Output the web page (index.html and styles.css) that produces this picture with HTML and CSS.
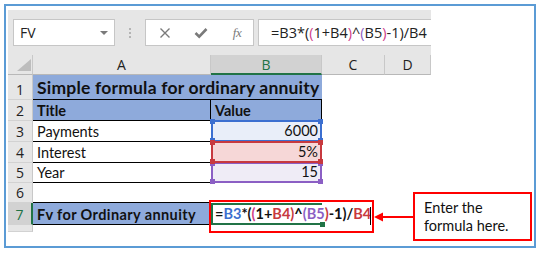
FILE: index.html
```html
<!DOCTYPE html>
<html>
<head>
    <title>Ordinary annuity</title>
    <link rel="stylesheet" href="styles.css">
</head>
<body>
    <div class="frame">
        <div class="excel">
            <div class="toolbar">
                <div class="namebox"><span>FV</span><span class="caret"></span></div>
                <div class="grip"><i></i><i></i><i></i></div>
                <div class="buttons">
                    <svg width="12" height="12" viewBox="0 0 12 12"><path d="M1.5 1.5 L10.5 10.5 M10.5 1.5 L1.5 10.5" stroke="#7a7a7a" stroke-width="1.4" fill="none"/></svg>
                    <svg width="14" height="12" viewBox="0 0 14 12"><path d="M1.5 6 L5.2 9.6 L12.5 2" stroke="#7a7a7a" stroke-width="2.6" fill="none"/></svg>
                    <span class="fx">fx</span>
                </div>
                <div class="formula">=B3*(<span class="pa">(</span>1+B4<span class="pa">)</span>^<span class="pb">(</span>B5<span class="pa">)</span>-1)/B4</div>
            </div>

            <div class="sheet">
                <div class="corner"><span></span></div>
                <div class="colhead">A</div>
                <div class="colhead selected">B</div>
                <div class="colhead">C</div>
                <div class="colhead">D</div>

                <div class="rowhead">1</div>
                <div class="cell title span2">Simple formula for ordinary annuity</div>
                <div class="cell"></div>
                <div class="cell"></div>

                <div class="rowhead">2</div>
                <div class="cell head lined">Title</div>
                <div class="cell head lined">Value</div>
                <div class="cell"></div>
                <div class="cell"></div>

                <div class="rowhead">3</div>
                <div class="cell lined">Payments</div>
                <div class="cell ref blue">6000<i class="h tl"></i><i class="h tr"></i><i class="h bl"></i><i class="h br"></i></div>
                <div class="cell"></div>
                <div class="cell"></div>

                <div class="rowhead">4</div>
                <div class="cell lined">Interest</div>
                <div class="cell ref red">5%<i class="h tl"></i><i class="h tr"></i><i class="h bl"></i><i class="h br"></i></div>
                <div class="cell"></div>
                <div class="cell"></div>

                <div class="rowhead">5</div>
                <div class="cell lined">Year</div>
                <div class="cell ref purple">15<i class="h tl"></i><i class="h tr"></i><i class="h bl"></i><i class="h br"></i></div>
                <div class="cell"></div>
                <div class="cell"></div>

                <div class="rowhead">6</div>
                <div class="cell lined"></div>
                <div class="cell"></div>
                <div class="cell"></div>
                <div class="cell"></div>

                <div class="rowhead selected">7</div>
                <div class="cell head lined wide">Fv for Ordinary annuity</div>
                <div class="cell active"><span class="edit">=<b class="c1">B3</b>*(<b class="c4">(</b>1+<b class="c2">B4</b><b class="c2">)</b>^<b class="c3">(</b><b class="c3">B5</b><b class="c2">)</b>-1)/<b class="c2">B4</b></span><i class="h br green"></i></div>
                <div class="cell"></div>
                <div class="cell"></div>

                <div class="rowhead"></div>
                <div class="cell"></div>
                <div class="cell"></div>
                <div class="cell"></div>
                <div class="cell"></div>
            </div>
        </div>

        <div class="mark"><span class="cursor"></span></div>
        <svg class="arrow" width="40" height="12" viewBox="0 0 40 12">
            <path d="M8 6 L40 6" stroke="#ff0000" stroke-width="2"/>
            <path d="M0 6 L9 1.5 L9 10.5 Z" fill="#ff0000"/>
        </svg>
        <div class="callout">Enter the<br>formula here.</div>
    </div>
</body>
</html>
```

FILE: styles.css
```css
body{
    margin:0;
    background:#fff;
    font-family:"Lato", sans-serif;
}

.frame{
    position:relative;
    margin:4px;
    width:532px;
    height:244px;
    box-sizing:border-box;
    border:2px solid #5b9bd5;
    padding:4px 0 0 2px;
}

.excel{
    width:423px;
}

/* formula bar */
.toolbar{
    height:45px;
    box-sizing:border-box;
    padding:9px 0 0 5px;
    background:#e6e6e6;
    display:flex;
    align-items:flex-start;
}

.namebox{
    width:102px;
    height:27px;
    box-sizing:border-box;
    border:1px solid #c6c6c6;
    background:#fff;
    display:flex;
    align-items:center;
    justify-content:space-between;
    padding:0 6px 0 6px;
    font:14px "Open Sans", sans-serif;
    color:#222;
}

.caret{
    border-left:4px solid transparent;
    border-right:4px solid transparent;
    border-top:4px solid #7a7a7a;
}

.grip{
    width:30px;
    height:27px;
    display:flex;
    flex-direction:column;
    align-items:center;
    justify-content:center;
    gap:2px;
}

.grip i{
    width:2px;
    height:2px;
    background:#b4b4b4;
}

.buttons{
    width:109px;
    height:27px;
    box-sizing:border-box;
    border:1px solid #c6c6c6;
    background:#fff;
    display:grid;
    grid-template-columns:37px 36px 36px;
    justify-items:center;
    align-items:center;
}

.fx{
    font:italic 13px "Liberation Serif", serif;
    color:#7a7a7a;
    letter-spacing:-0.5px;
}

.formula{
    margin-left:4px;
    flex:1;
    height:27px;
    box-sizing:border-box;
    border:1px solid #c6c6c6;
    border-right:none;
    background:#fff;
    padding:0 0 0 12px;
    font:14.5px "Open Sans", sans-serif;
    line-height:25px;
    color:#222;
    white-space:nowrap;
}

.pa{ color:#d0408a; }
.pb{ color:#8e5fc3; }

/* sheet */
.sheet{
    display:grid;
    grid-template-columns:25px 178px 111px 63px 46px;
    grid-template-rows:20px 25px 21px 21px 21px 20px 20px 22px 7px;
    background:#fff;
    font-size:14.5px;
    color:#111;
}

.corner{
    background:#e6e6e6;
    border-right:1px solid #c8c8c8;
    border-bottom:1px solid #b8b8b8;
    position:relative;
}

.corner span{
    position:absolute;
    right:1px;
    bottom:3px;
    border-left:14px solid transparent;
    border-bottom:12px solid #bdbdbd;
}

.colhead{
    background:#e6e6e6;
    border-right:1px solid #c8c8c8;
    border-bottom:1px solid #b8b8b8;
    box-sizing:border-box;
    text-align:center;
    font:14px/19px "Open Sans", sans-serif;
    color:#222;
}

.colhead.selected{
    background:#d2d2d2;
    color:#217346;
    border-bottom:2px solid #217346;
}

.rowhead{
    background:#e6e6e6;
    border-right:1px solid #c8c8c8;
    border-bottom:1px solid #d2d2d2;
    box-sizing:border-box;
    display:flex;
    align-items:flex-end;
    justify-content:center;
    padding-bottom:0;
    font:14px "Open Sans", sans-serif;
    color:#222;
}

.rowhead.selected{
    background:#d2d2d2;
    color:#217346;
    border-right:2px solid #217346;
}

.cell{
    box-sizing:border-box;
    display:flex;
    align-items:flex-end;
    padding:0 3px 1px 4px;
    white-space:nowrap;
    position:relative;
}

.span2{
    grid-column:span 2;
}

.title{
    background:#8eaadb;
    font-weight:bold;
    font-size:17.5px;
    letter-spacing:0.2px;
    border-bottom:1px solid #000;
}

.head{
    background:#8eaadb;
    font-weight:bold;
    border-right:1px solid #000;
}

.wide{
    letter-spacing:0.4px;
}

.lined{
    border-bottom:1px solid #000;
}

.ref{
    justify-content:flex-end;
    border:2px solid;
    margin:-1px 0 0 0;
    padding-right:2px;
}

.blue{ border-color:#3c6fd0; background:#e9eef9; }
.red{ border-color:#c7393f; background:#f6d7d7; z-index:2; }
.purple{ border-color:#8b5fc4; background:#efecf6; }

.h{
    position:absolute;
    width:5px;
    height:5px;
}

.blue .h{ background:#3c6fd0; }
.red .h{ background:#c7393f; }
.purple .h{ background:#8b5fc4; }

.tl{ left:-3px; top:-3px; }
.tr{ right:-3px; top:-3px; }
.bl{ left:-3px; bottom:-3px; }
.br{ right:-3px; bottom:-3px; }

.active{
    border:2px solid #217346;
    border-right:none;
    padding-left:2px;
}

.edit{
    font-weight:bold;
    color:#111;
}

.edit b{ font-weight:bold; }
.c1{ color:#3c6fd0; }
.c2{ color:#c7393f; }
.c3{ color:#8b5fc4; }
.c4{ color:#d0408a; }

.h.green{
    background:#217346;
    right:-3px;
    bottom:-4px;
}

/* annotations */
.mark{
    position:absolute;
    left:203px;
    top:194px;
    width:165px;
    height:33px;
    box-sizing:border-box;
    border:2px solid #ff0000;
}

.cursor{
    position:absolute;
    right:1px;
    top:5px;
    width:1px;
    height:18px;
    background:#000;
}

.arrow{
    position:absolute;
    left:368px;
    top:205px;
}

.callout{
    position:absolute;
    left:407px;
    top:186px;
    width:119px;
    height:49px;
    box-sizing:border-box;
    border:2px solid #ff0000;
    background:#fff;
    padding:5px 0 0 9px;
    font-size:14.5px;
    line-height:18px;
    color:#111;
}
```
